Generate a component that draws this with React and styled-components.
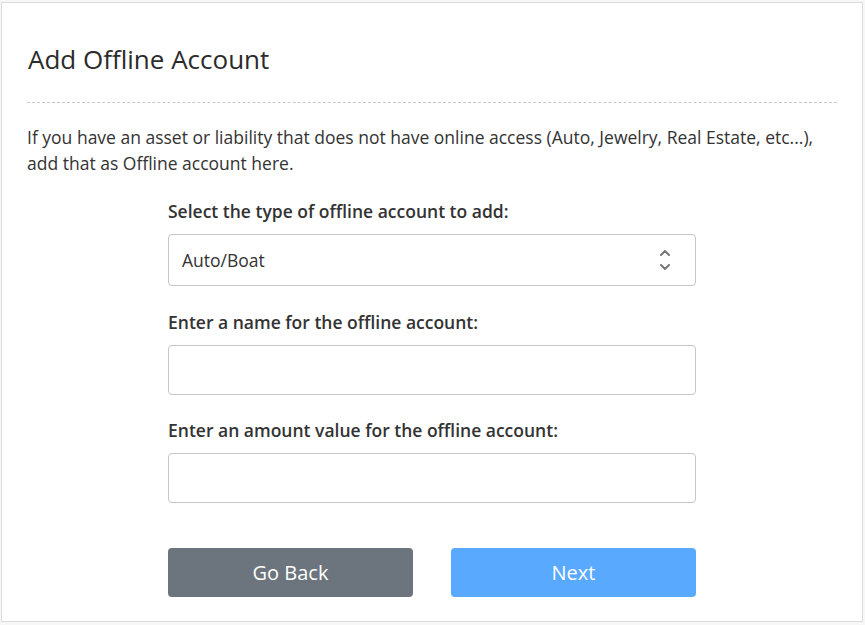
import React from "react";
import styled, { createGlobalStyle } from "styled-components";

const Global = createGlobalStyle`
  html, body { margin: 0; padding: 0; background: #f7f7f7; }
  body { font-family: "Open Sans", "Noto Sans", sans-serif; color: #333; }
  * { box-sizing: border-box; }
`;

const Page = styled.div`
  padding: 2px 2px 3px 1px;
  width: 865px;
  height: 625px;
`;

const Card = styled.div`
  background: #fff;
  border: 1px solid #dcdcdc;
  height: 620px;
  padding: 0 25px;
`;

const Title = styled.h1`
  margin: 0;
  padding-top: 40px;
  padding-bottom: 27px;
  font-size: 26px;
  font-weight: 500;
  line-height: 32px;
  color: #2b2b2b;
  border-bottom: 1px dashed #c8c8c8;
  padding-left: 1px;
`;

const Intro = styled.p`
  margin: 21px 0 0;
  font-size: 17.5px;
  line-height: 26px;
  color: #333;
`;

const Form = styled.form`
  width: 528px;
  margin: 23px auto 0;
  display: flex;
  flex-direction: column;
`;

const Field = styled.div`
  display: flex;
  flex-direction: column;
  gap: 11px;
  margin-bottom: ${(p) => p.$after}px;
`;

const Label = styled.label`
  font-size: 17.5px;
  font-weight: 600;
  line-height: 24px;
  color: #333;
`;

const SelectBox = styled.div`
  position: relative;
  height: 52px;
  border: 1px solid #c6c6c6;
  border-radius: 4px;
  display: flex;
  align-items: center;
  padding: 0 13px;
  font-size: 17.5px;
  color: #333;
`;

const Arrows = styled.svg`
  position: absolute;
  right: 24px;
  top: 50%;
  transform: translateY(-50%);
`;

const Input = styled.input`
  height: 50px;
  border: 1px solid #c6c6c6;
  border-radius: 4px;
  font: inherit;
  font-size: 17.5px;
  padding: 0 13px;
  outline: none;
`;

const Buttons = styled.div`
  display: flex;
  justify-content: space-between;
`;

const Button = styled.button`
  width: 245px;
  height: 49px;
  border: none;
  border-radius: 4px;
  font-family: "Open Sans", sans-serif;
  font-size: 20px;
  color: #fff;
  background: ${(p) => (p.$primary ? "#59a9ff" : "#6c757d")};
  cursor: pointer;
`;

export default function App() {
  return (
    <>
      <Global />
      <Page>
        <Card>
          <Title>Add Offline Account</Title>
          <Intro>
            If you have an asset or liability that does not have online access (Auto, Jewelry, Real Estate, etc...), add that as Offline account here.
          </Intro>
          <Form onSubmit={(e) => e.preventDefault()}>
            <Field $after={24}>
              <Label>Select the type of offline account to add:</Label>
              <SelectBox>
                Auto/Boat
                <Arrows width="12" height="22" viewBox="0 0 12 22">
                  <path d="M2 6 L6 2 L10 6" fill="none" stroke="#777" strokeWidth="2" strokeLinecap="round" strokeLinejoin="round" />
                  <path d="M2 16 L6 20 L10 16" fill="none" stroke="#777" strokeWidth="2" strokeLinecap="round" strokeLinejoin="round" />
                </Arrows>
              </SelectBox>
            </Field>
            <Field $after={23}>
              <Label>Enter a name for the offline account:</Label>
              <Input type="text" />
            </Field>
            <Field $after={45}>
              <Label>Enter an amount value for the offline account:</Label>
              <Input type="text" />
            </Field>
            <Buttons>
              <Button type="button">Go Back</Button>
              <Button type="submit" $primary>Next</Button>
            </Buttons>
          </Form>
        </Card>
      </Page>
    </>
  );
}
